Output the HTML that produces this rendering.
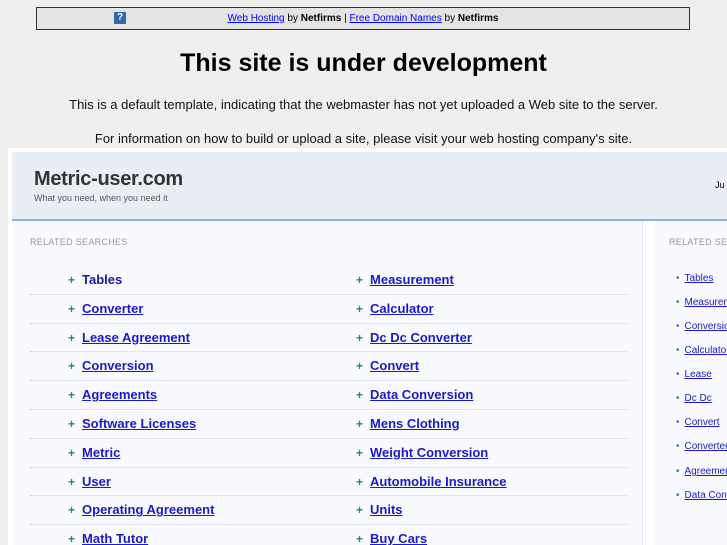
<!DOCTYPE html>
<html><head><style>
body{margin:0;width:727px;height:545px;overflow:hidden;background:#efefef;font-family:"Liberation Sans",sans-serif;position:relative}
.ban{position:absolute;left:36px;top:7px;width:652px;height:21px;border:1px solid #333;background:#e4e4e4;font-size:10px;text-align:center;line-height:21px;color:#000}
.ban a{color:#00f;text-decoration:underline}
.q{position:absolute;left:77px;top:4px;width:12px;height:12px;background:#3366aa;color:#fff;font-size:10px;line-height:12px;font-weight:bold}
h1{position:absolute;top:49px;left:0;width:727px;text-align:center;margin:0;font-size:25px;font-weight:bold;color:#000}
.p{position:absolute;left:0;width:727px;text-align:center;font-size:13px;color:#111}
.fr{position:absolute;left:8px;top:148px;width:719px;height:397px;background:#fff;overflow:hidden}
.hd{position:absolute;left:4px;top:4px;width:715px;height:67px;background:#e9eef5;border-bottom:2px solid #8fb0e6}
.t{position:absolute;left:22px;top:16px;font-size:20px;color:#333;font-weight:bold;letter-spacing:-.3px}
.st{position:absolute;left:22px;top:41px;font-size:9px;color:#555}
.main{position:absolute;left:4px;top:73px;width:630px;height:330px;background:#f8faff;border-right:1px solid #dde6f2}
.rc{position:absolute;left:647px;top:73px;width:80px;height:330px;background:#f8faff;overflow:hidden;white-space:nowrap}
.lab{position:absolute;font-size:9px;color:#999;letter-spacing:.3px;white-space:nowrap}
.row{position:absolute;left:18px;width:598px;height:28.8px;border-bottom:1px dotted #c8d2e0}
.it{position:absolute;top:7px;font-size:13px;font-weight:bold;color:#1a1acc;text-decoration:underline;white-space:nowrap}
.it:before{content:"+";color:#2a8a6a;font-size:12px;margin-right:7px;text-decoration:none;display:inline-block}
.sm{position:absolute;left:21px;font-size:10px;color:#1a1acc;text-decoration:underline}
.sm:before{content:"•";color:#2a8a6a;margin-right:5px;display:inline-block}
</style></head><body>
<div class="ban"><span class="q">?</span><a>Web Hosting</a> by <b>Netfirms</b> | <a>Free Domain Names</a> by <b>Netfirms</b></div>
<h1>This site is under development</h1>
<div class="p" style="top:97px">This is a default template, indicating that the webmaster has not yet uploaded a Web site to the server.</div>
<div class="p" style="top:131px">For information on how to build or upload a site, please visit your web hosting company's site.</div>
<div class="fr">
<div class="hd"><div class="t">Metric-user.com</div><div class="st">What you need, when you need it</div><div style="position:absolute;left:703px;top:28px;font-size:9px">Ju</div></div>
<div class="main">
<div class="lab" style="left:18px;top:16px">RELATED SEARCHES</div>
<div class="row" style="top:44px"><span class="it" style="left:38px;text-decoration:none;color:#1a1a99">Tables</span><span class="it" style="left:326px">Measurement</span></div>
<div class="row" style="top:72.8px"><span class="it" style="left:38px">Converter</span><span class="it" style="left:326px">Calculator</span></div>
<div class="row" style="top:101.6px"><span class="it" style="left:38px">Lease Agreement</span><span class="it" style="left:326px">Dc Dc Converter</span></div>
<div class="row" style="top:130.4px"><span class="it" style="left:38px">Conversion</span><span class="it" style="left:326px">Convert</span></div>
<div class="row" style="top:159.2px"><span class="it" style="left:38px">Agreements</span><span class="it" style="left:326px">Data Conversion</span></div>
<div class="row" style="top:188px"><span class="it" style="left:38px">Software Licenses</span><span class="it" style="left:326px">Mens Clothing</span></div>
<div class="row" style="top:216.8px"><span class="it" style="left:38px">Metric</span><span class="it" style="left:326px">Weight Conversion</span></div>
<div class="row" style="top:245.6px"><span class="it" style="left:38px">User</span><span class="it" style="left:326px">Automobile Insurance</span></div>
<div class="row" style="top:274.4px"><span class="it" style="left:38px">Operating Agreement</span><span class="it" style="left:326px">Units</span></div>
<div class="row" style="top:303.2px;border:0"><span class="it" style="left:38px">Math Tutor</span><span class="it" style="left:326px">Buy Cars</span></div>
</div>
<div class="rc">
<div class="lab" style="left:14px;top:16px">RELATED SEARCHES</div>
<div class="sm" style="top:52px">Tables</div>
<div class="sm" style="top:76px">Measurement</div>
<div class="sm" style="top:100px">Conversion</div>
<div class="sm" style="top:124px">Calculator</div>
<div class="sm" style="top:148px">Lease</div>
<div class="sm" style="top:172px">Dc Dc</div>
<div class="sm" style="top:196px">Convert</div>
<div class="sm" style="top:220px">Converter</div>
<div class="sm" style="top:245px">Agreements</div>
<div class="sm" style="top:269px">Data Conversion</div>
</div>
</div>
</body></html>
